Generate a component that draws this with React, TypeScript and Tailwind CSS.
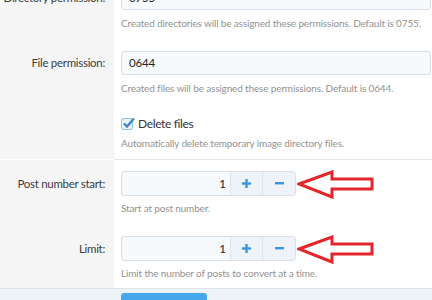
import React from "react";

const font = { fontFamily: "Lato, 'Open Sans', sans-serif" };

function Label({ children }: { children?: React.ReactNode }) {
  return (
    <div className="w-[114px] shrink-0 bg-[#f5f5f5] flex justify-end pr-[9px] text-[11.5px] tracking-[-0.3px] text-[#3c3c3c]">
      {children}
    </div>
  );
}

function Help({ children, mt = "mt-[6px]" }: { children: React.ReactNode; mt?: string }) {
  return (
    <div className={`text-[10px] tracking-[-0.15px] leading-[14px] text-[#929292] whitespace-nowrap ${mt}`}>
      {children}
    </div>
  );
}

function TextInput({ value }: { value: string }) {
  return (
    <div className="h-[24px] border border-[#d8dfe6] rounded-[3px] bg-[#f7fafd] flex items-center px-[7px] text-[11.5px] tracking-[-0.2px] text-[#222]">
      {value}
    </div>
  );
}

function Spinner() {
  return (
    <div className="h-[25px] w-[175px] shrink-0 border border-[#d8dfe6] rounded-[3px] bg-[#f7fafd] flex">
      <div className="w-[109px] flex items-center justify-end pr-[4px] text-[11.5px] text-[#222] border-r border-[#dde4eb]">1</div>
      <div className="w-[32px] flex items-center justify-center bg-[#edf3f9] border-r border-[#dde4eb]">
        <svg width="9" height="9" viewBox="0 0 9 9">
          <rect x="3.3" y="0" width="2.4" height="9" fill="#3f95dd" />
          <rect x="0" y="3.3" width="9" height="2.4" fill="#3f95dd" />
        </svg>
      </div>
      <div className="flex-1 flex items-center justify-center bg-[#edf3f9]">
        <svg width="9" height="3" viewBox="0 0 9 3">
          <rect x="0" y="0" width="9" height="2.4" fill="#3f95dd" />
        </svg>
      </div>
    </div>
  );
}

function Arrow() {
  return (
    <svg width="80" height="30" viewBox="0 0 80 30" className="ml-[1px] mt-[-1px] shrink-0">
      <path
        d="M2 14 L35 2 L35 9 L75 9 L75 19 L35 19 L35 27 Z"
        fill="none"
        stroke="#e3262a"
        strokeWidth="3"
        strokeLinejoin="miter"
      />
    </svg>
  );
}

function SpinnerRow() {
  return (
    <div className="flex items-start h-[25px] overflow-visible">
      <Spinner />
      <Arrow />
    </div>
  );
}

export default function App() {
  return (
    <div className="w-[432px] h-[300px] overflow-hidden bg-white flex flex-col" style={font}>
      <div className="mt-[-14px]">
        {/* Directory permission */}
        <div className="flex">
          <Label>
            <div className="h-[24px] flex items-center">Directory permission:</div>
          </Label>
          <div className="flex-1 pl-[7px] pr-[1px] pb-[21px]">
            <TextInput value="0755" />
            <Help>Created directories will be assigned these permissions. Default is 0755.</Help>
          </div>
        </div>
        {/* File permission */}
        <div className="flex">
          <Label>
            <div className="h-[24px] flex items-center">File permission:</div>
          </Label>
          <div className="flex-1 pl-[7px] pr-[1px] pb-[20px]">
            <TextInput value="0644" />
            <Help>Created files will be assigned these permissions. Default is 0644.</Help>
          </div>
        </div>
        {/* Checkbox */}
        <div className="flex">
          <Label />
          <div className="flex-1 pl-[7px] pb-[9px]">
            <div className="flex items-center h-[16px] mt-[1px]">
              <div className="relative w-[12px] h-[12px] border border-[#9cc0e3] bg-[#e9f1f9] rounded-[2px]">
                <svg width="14" height="12" viewBox="0 0 14 12" className="absolute left-[0px] top-[-2px]">
                  <path d="M2 6.5 L5 9.5 L12 1.5" fill="none" stroke="#3a87d2" strokeWidth="2.4" />
                </svg>
              </div>
              <span className="ml-[5px] text-[12px] tracking-[-0.35px] text-[#333]">Delete files</span>
            </div>
            <Help mt="mt-[4px]">Automatically delete temporary image directory files.</Help>
          </div>
        </div>
        {/* Post number start */}
        <div className="flex border-t border-[#e4e8ec] [border-image:linear-gradient(to_right,transparent_114px,#e4e8ec_114px)_1]">
          <Label>
            <div className="h-[25px] mt-[11px] flex items-center">Post number start:</div>
          </Label>
          <div className="flex-1 pl-[7px] pt-[11px] pb-[21px]">
            <SpinnerRow />
            <Help mt="mt-[5px]">Start at post number.</Help>
          </div>
        </div>
        {/* Limit */}
        <div className="flex">
          <Label>
            <div className="h-[25px] flex items-center">Limit:</div>
          </Label>
          <div className="flex-1 pl-[7px] pb-[8px]">
            <SpinnerRow />
            <Help mt="mt-[5px]">Limit the number of posts to convert at a time.</Help>
          </div>
        </div>
      </div>
      <div className="flex-1 border-t border-[#dbe3ea] bg-[#eef3f8] pl-[121px] pt-[4px]">
        <div className="w-[86px] h-[24px] rounded-[3px] bg-[#47a7eb]" />
      </div>
    </div>
  );
}
